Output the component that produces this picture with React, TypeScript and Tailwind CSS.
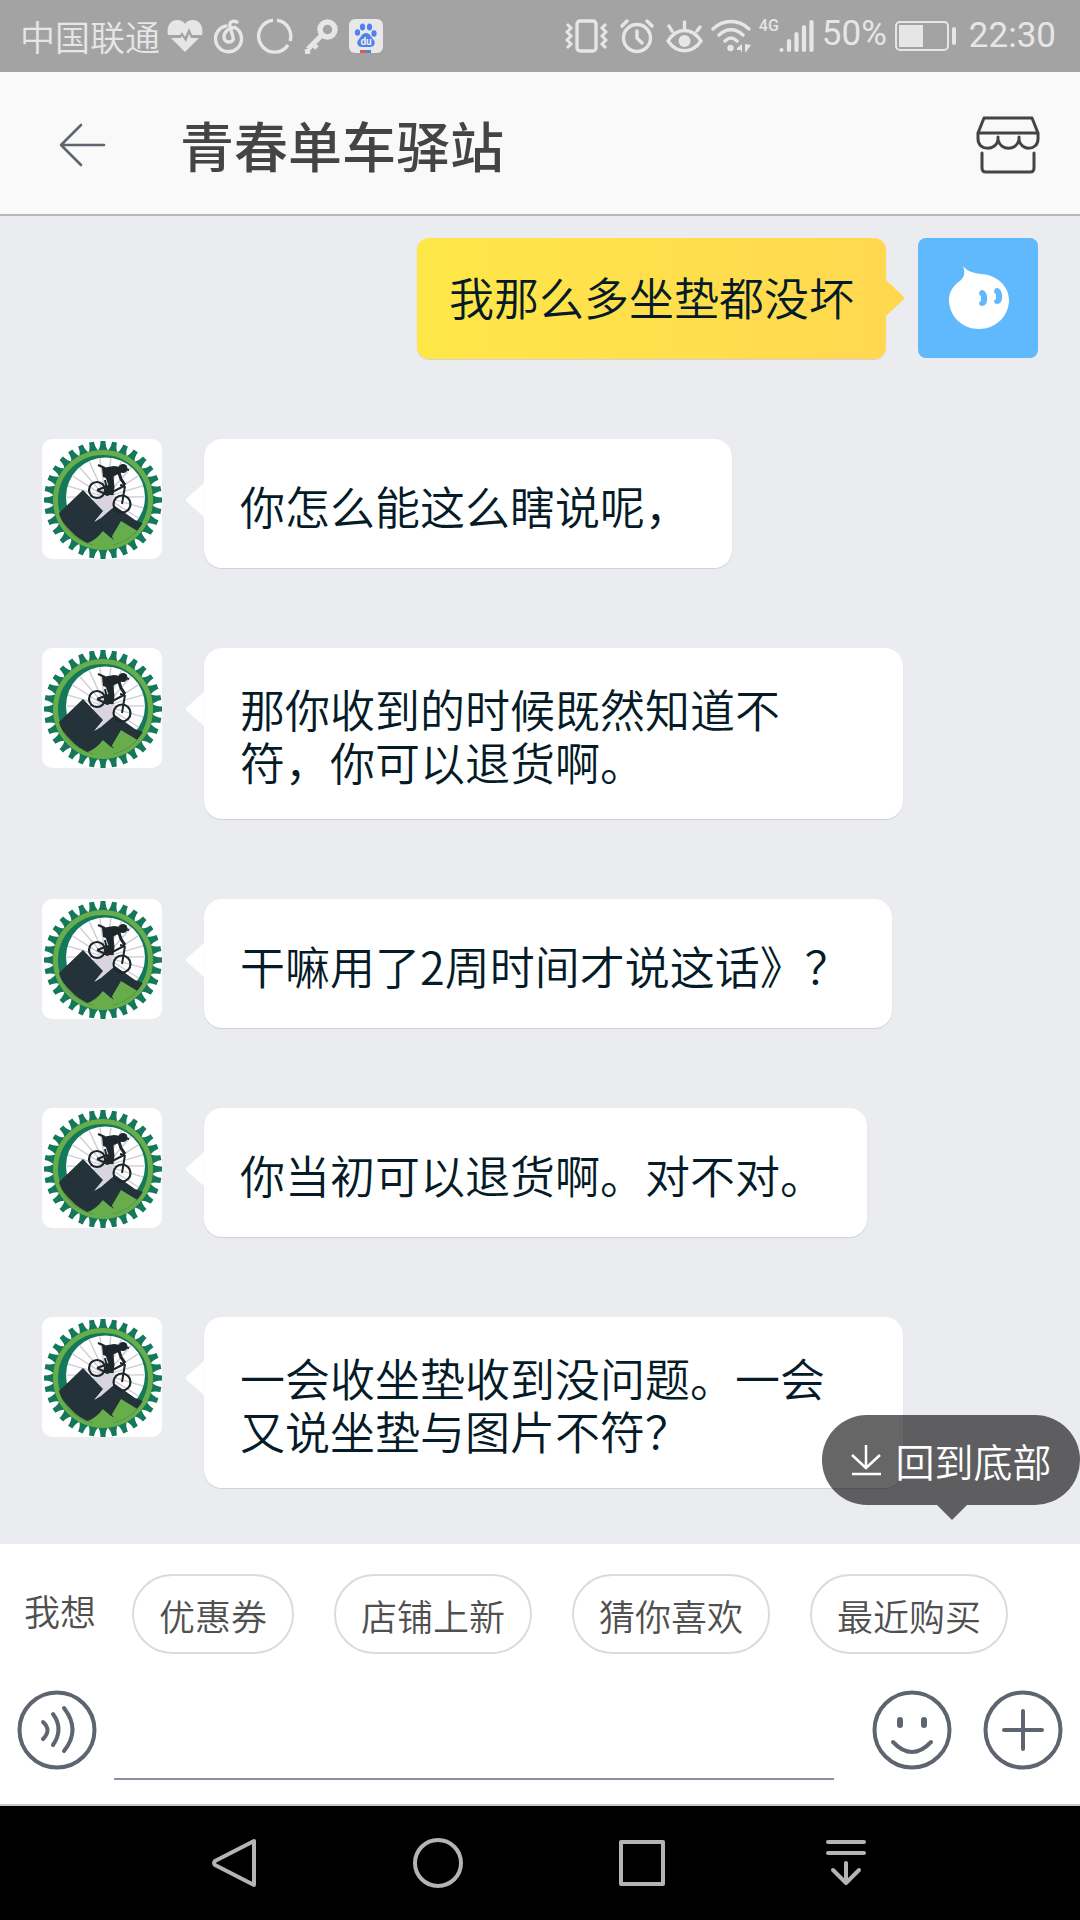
import type { ReactNode } from 'react';

const messages = [
  '你怎么能这么瞎说呢，',
  '那你收到的时候既然知道不符，你可以退货啊。',
  '干嘛用了2周时间才说这话》？',
  '你当初可以退货啊。对不对。',
  '一会收坐垫收到没问题。一会又说坐垫与图片不符？',
];

const quickReplies = ['优惠券', '店铺上新', '猜你喜欢', '最近购买'];

const teeth = Array.from({ length: 32 }, (_, i) => (i * 360) / 32);
const spokes = Array.from({ length: 22 }, (_, i) => (i * 360) / 22 + 8);

function StatusBar() {
  return (
    <div className="flex h-[72px] items-center justify-between bg-[#a3a3a3] pr-6 pl-5 text-[#e6e6e6]">
      <div className="flex items-center gap-[11px]">
        <span className="-mr-1 text-[35px] leading-[40px] font-[350]">中国联通</span>
        <svg width="36" height="36" viewBox="0 0 36 36" fill="currentColor">
          <path d="M1 17C-1 8 4 2 10 2c4 0 7 2 8 4 1-2 4-4 8-4 6 0 11 6 9 15H25l-3-7-4 9-3-5-2 3zM4 20h10l1-2 4 6 3-8 2 4h8L18 34z" />
        </svg>
        <svg width="32" height="36" viewBox="0 0 32 36" fill="none" stroke="currentColor" strokeWidth="3.4" strokeLinecap="round">
          <path d="M12 8A13 13 0 1 0 21 9.500C15 9 10 14 10 19c0 3 2 5 5 5s5-2 4-5L16 8c-1-4 3-6 7-4" />
        </svg>
        <svg width="36" height="36" viewBox="0 0 36 36" fill="none" stroke="currentColor" strokeWidth="3.4">
          <path d="M20 2.200A16 16 0 0 1 33 23" />
          <path d="M31 27A16 16 0 1 1 16 2.200" />
        </svg>
        <svg width="34" height="36" viewBox="0 0 34 36" fill="none" stroke="currentColor">
          <circle cx="23.500" cy="11.500" r="7.500" strokeWidth="5.500" />
          <path d="M18 17 4 31M1 34l5-1M9 26l4 4" strokeWidth="5" />
        </svg>
        <svg width="34" height="34" viewBox="0 0 34 34">
          <rect width="34" height="34" rx="6" fill="#e8e8e8" />
          <g fill="#5080ea">
            <ellipse cx="13.500" cy="8" rx="2.600" ry="3.600" />
            <ellipse cx="20.500" cy="8" rx="2.600" ry="3.600" />
            <ellipse cx="8.500" cy="13.500" rx="2.600" ry="3.300" />
            <ellipse cx="25" cy="14.500" rx="2.600" ry="3.300" />
            <path d="M17 14c4 0 5 4 7 6 3 3 2 8-3 8h-8c-5 0-6-5-3-8 2-2 3-6 7-6z" />
            <path d="M16 31h6v3h-6z" />
          </g>
          <path d="M11 31h6v3h-6z" fill="#dc5a5a" />
          <text x="17" y="26" textAnchor="middle" fill="#eee" className="font-[Roboto] text-[10px] font-bold">
            du
          </text>
        </svg>
      </div>
      <div className="flex items-center font-[Roboto]">
        <svg className="mr-3" width="43" height="36" viewBox="0 0 43 36" fill="none" stroke="currentColor" strokeWidth="3.400">
          <rect x="12" y="3" width="19" height="30" rx="3" />
          <path d="m2 6 4 4-4 4 4 4-4 4 4 4-4 4M41 6l-4 4 4 4-4 4 4 4-4 4 4 4" strokeWidth="3" />
        </svg>
        <svg className="mr-3" width="34" height="36" viewBox="0 0 34 36" fill="none" stroke="currentColor" strokeWidth="3.400" strokeLinecap="round">
          <circle cx="17" cy="20" r="13.500" />
          <path d="M17 13v7l5 5M2 8l5-5M32 8l-5-5" />
        </svg>
        <svg className="mr-2" width="37" height="36" viewBox="0 0 37 36" fill="none" stroke="currentColor" strokeWidth="3.400" strokeLinecap="round">
          <path d="M2 23c9-14 24-14 33 0-9 13-24 13-33 0zM18.500 12V4M6 13 3 8M31 13l3-4" />
          <circle cx="18.500" cy="23" r="6" fill="currentColor" stroke="none" />
        </svg>
        <svg className="mr-2" width="40" height="36" viewBox="0 0 40 36" fill="none" stroke="currentColor" strokeWidth="3.400" strokeLinecap="round">
          <path d="M2 11c10-10 26-10 36 0M8 17c7-7 17-7 24 0M14 23c4-4 8-4 12 0" />
          <circle cx="19.500" cy="30" r="3.200" fill="currentColor" stroke="none" />
          <path d="M31 26v8h-1v-2h-4v-2zM34 26l6 1-5 7h-1z" fill="currentColor" stroke="none" />
        </svg>
        <span className="-mt-5 text-[16px] leading-[18px] font-medium">4G</span>
        <svg className="mr-2" width="35" height="36" viewBox="0 0 35 36" fill="none" stroke="currentColor" strokeWidth="4.200" strokeLinecap="round">
          <path d="M2.500 32v0M10 32V23M17.500 32V16M25 32V9M32.500 32V4" />
        </svg>
        <span className="mr-2 pb-1 text-[35px] leading-[36px]">50%</span>
        <svg className="mr-3" width="62" height="30" viewBox="0 0 62 30" fill="none" stroke="currentColor">
          <rect x="1" y="1" width="52" height="28" rx="4" strokeWidth="2" />
          <path d="M4 4h24v22H4z" fill="currentColor" stroke="none" />
          <path d="M59 8v14" strokeWidth="4" strokeLinecap="round" />
        </svg>
        <span className="text-[35px] leading-[36px]">22:30</span>
      </div>
    </div>
  );
}

function Header() {
  return (
    <header className="flex h-[144px] items-center border-b-2 border-[#b8b8ba] bg-[#f9f9f9] pt-[3px] pr-9 pl-[56px]">
      <button type="button" aria-label="返回">
        <svg width="54" height="54" viewBox="0 0 54 54" fill="none" stroke="#5f6570" strokeWidth="2.600" strokeLinecap="round" strokeLinejoin="round">
          <path d="M25 7 5 27l20 20M5 27h43" />
        </svg>
      </button>
      <h1 className="ml-[70px] flex-1 text-[54px] leading-[72px] font-medium text-[#444]">青春单车驿站</h1>
      <button type="button" aria-label="店铺">
        <svg width="72" height="64" viewBox="0 0 72 64" fill="none" stroke="#444" strokeWidth="3" strokeLinecap="round" strokeLinejoin="round">
          <path d="m6 20 6-15h48l6 15zM6 20v6c0 12 18 12 20 1 3 11 18 11 21 0 2 11 19 11 19-1v-6M26 27v-3M47 27v-3" />
          <path d="M10 40v15q0 4 4 4h44q4 0 4-4V40" />
        </svg>
      </button>
    </header>
  );
}

function ShopAvatar() {
  return (
    <svg className="size-[120px] shrink-0 rounded-[10px] bg-white" viewBox="0 0 120 120">
      <defs>
        <clipPath id="badge">
          <circle cx="61" cy="61" r="46" />
        </clipPath>
      </defs>
      {teeth.map((angle) => (
        <path key={angle} d="M55.500 12q3-3 3-10h5q0 7 3 10z" fill="#14785a" transform={`rotate(${angle} 61 61)`} />
      ))}
      <circle cx="61" cy="61" r="50" fill="#14785a" />
      <circle cx="61" cy="61" r="47.500" fill="#14785a" stroke="#67ad4b" strokeWidth="5" />
      <g clipPath="url(#badge)">
        <circle cx="63.500" cy="58" r="39.500" fill="#fff" />
        {spokes.map((angle) => (
          <path key={angle} d="M63.500 56V19" stroke="#cfcbd3" strokeWidth="1.400" transform={`rotate(${angle} 63.5 58)`} />
        ))}
        <path d="M46 66 62 55l12 9-16 22z" fill="#d9d5de" />
        <path d="M14 77 41 51l20 21-9 11 7-4 14-12 20 14 8 3-4 10-10 12H14z" fill="#24323a" />
        <path d="M20 82q12 16 25 22 8-2 16-12l8 7 10-17 18 11 12 0v16H14z" fill="#67ad4b" />
        <path d="m61 92 11 9-6-10-4-6z" fill="#24323a" />
      </g>
      <g fill="none" stroke="#1d262b">
        <circle cx="55" cy="51" r="8" strokeWidth="2.200" />
        <circle cx="80" cy="65" r="8.500" strokeWidth="2.200" />
        <path d="m55 51 10 5 17-9M63 41l3 15M83 47l-3 18M66 47l-11 4M78 46l5 1" strokeWidth="2" />
        <path d="m65 35 4 11-5 10M69 38l1 10-1 8" strokeWidth="5" />
        <path d="m76 31 3 9 4 6" strokeWidth="3" />
      </g>
      <path d="m60 29 12-2 7 1v6l-7 3-2 4-9-3z" fill="#1d262b" />
      <ellipse cx="81" cy="29.500" rx="4.500" ry="4.500" fill="#1d262b" />
      <path d="m56 26 7 3M83 30l4 1" stroke="#1d262b" strokeWidth="2" />
    </svg>
  );
}

function MyAvatar() {
  return (
    <svg className="size-[120px] shrink-0 rounded-[8px] bg-[#60b9fd]" viewBox="0 0 120 120">
      <path d="M45 28c4 5 9 7 18 8 16 1 28 12 28 26 0 16-13 29-30 29S31 78 31 62c0-9 5-15 12-20 4-4 4-9 2-14z" fill="#fff" />
      <path d="M64 52c6 0 8 16 0 16-3 0-4-4-1-5v-5c-3-1-2-6 1-6zM79 50c6 0 8 16 0 16-3 0-4-4-1-5v-5c-3-1-2-6 1-6z" fill="#60b9fd" />
    </svg>
  );
}

function ShopMessage({ text }: { text: string }) {
  return (
    <li className="flex items-start">
      <ShopAvatar />
      <svg className="mt-11 ml-6 shrink-0" width="18" height="34" viewBox="0 0 18 34" fill="#fff">
        <path d="m18 0v34L1 19q-2-2 0-4z" />
      </svg>
      <p className="flex min-h-[129px] max-w-[699px] items-center rounded-[18px] bg-white pt-[34px] pr-[42px] pb-[31px] pl-9 text-[45px] leading-[53px] font-[350] text-[#051b28] shadow-[0_1px_1px_#cfd0d6]">
        {text}
      </p>
    </li>
  );
}

function RoundButton({ label, children }: { label: string; children: ReactNode }) {
  return (
    <button type="button" aria-label={label} className="shrink-0">
      <svg width="80" height="80" viewBox="0 0 80 80" fill="none" stroke="#5f6570" strokeWidth="4" strokeLinecap="round">
        <circle cx="40" cy="40" r="37.500" />
        {children}
      </svg>
    </button>
  );
}

function Composer() {
  return (
    <footer className="border-b-2 border-[#c8c8c8] bg-white pb-6">
      <div className="flex items-center pt-[30px] pl-6 text-[36px] leading-[52px] font-[350] text-[#505050]">
        <span className="mr-9 pb-2">我想</span>
        <div className="flex gap-10">
          {quickReplies.map((reply) => (
            <button key={reply} type="button" className="h-20 rounded-full border-2 border-[#d8dbe2] px-[25px] pt-0.5">
              {reply}
            </button>
          ))}
        </div>
      </div>
      <div className="flex items-start px-[17px] pt-9">
        <RoundButton label="语音">
          <path d="M26 32q9 8 0 17M36 24q11 15 0 31M47 18q17 22 0 43" />
        </RoundButton>
        <input aria-label="输入消息" className="mr-[38px] ml-[17px] h-[90px] min-w-0 flex-1 border-b-2 border-[#8c8fa2] text-[45px] outline-none" />
        <div className="flex gap-[31px]">
          <RoundButton label="表情">
            <path d="M28 30v5M52 30v5" strokeWidth="6" />
            <path d="M21 52q19 20 38 0" />
          </RoundButton>
          <RoundButton label="更多">
            <path d="M40 21v38M21 40h38" />
          </RoundButton>
        </div>
      </div>
    </footer>
  );
}

function NavButton({ label, children }: { label: string; children: ReactNode }) {
  return (
    <button type="button" aria-label={label} className="flex flex-1 justify-center">
      <svg width="54" height="54" viewBox="0 0 54 54" fill="none" stroke="#b4b4b4" strokeWidth="4" strokeLinecap="round" strokeLinejoin="round">
        {children}
      </svg>
    </button>
  );
}

export default function App() {
  return (
    <div className="flex min-h-screen flex-col bg-[#ebecf0] font-['Noto_Sans_CJK_SC',sans-serif]">
      <StatusBar />
      <Header />
      <main className="relative flex-1 pt-[22px] pr-[42px] pb-[55px] pl-[42px]">
        <ul className="flex flex-col gap-20">
          <li className="flex items-start justify-end">
            <p className="rounded-[12px] bg-linear-to-r from-[#ffe748] to-[#ffd850] px-8 pt-8 pb-9 text-[45px] leading-[53px] font-[350] text-[#051b28] shadow-[0_1px_1px_#cfd0d6]">
              我那么多坐垫都没坏
            </p>
            <svg className="mt-[42px] mr-[14px] shrink-0" width="18" height="36" viewBox="0 0 18 36" fill="#ffd850">
              <path d="M0 0v36l17-16q2-2 0-4z" />
            </svg>
            <MyAvatar />
          </li>
          {messages.map((text) => (
            <ShopMessage key={text} text={text} />
          ))}
        </ul>
        <button type="button" className="absolute right-0 bottom-[39px] h-[90px] w-[258px] rounded-full bg-black/60 text-[39px] leading-[56px] font-[350] text-white">
          <span className="flex items-center justify-center gap-[11px]">
            <svg width="34" height="34" viewBox="0 0 34 34" fill="none" stroke="currentColor" strokeWidth="2.500">
              <path d="M16 2v23M2 12l14 13 14-13M2 31h29" />
            </svg>
            回到底部
          </span>
          <svg className="absolute top-full left-[115px]" width="30" height="15" viewBox="0 0 30 15">
            <path d="M0 0h30L15 15z" fillOpacity="0.6" />
          </svg>
        </button>
      </main>
      <Composer />
      <nav className="flex h-[114px] items-center bg-black px-[132px]">
        <NavButton label="返回">
          <path d="M47 5v44L8 29q-2-2 0-4z" />
        </NavButton>
        <NavButton label="主屏幕">
          <circle cx="27" cy="27" r="23" />
        </NavButton>
        <NavButton label="最近任务">
          <path d="M6 6h42v42H6z" />
        </NavButton>
        <NavButton label="通知栏">
          <path d="M9 6h36M9 17h36M27 27v20M14 34l13 13 13-13" />
        </NavButton>
      </nav>
    </div>
  );
}
